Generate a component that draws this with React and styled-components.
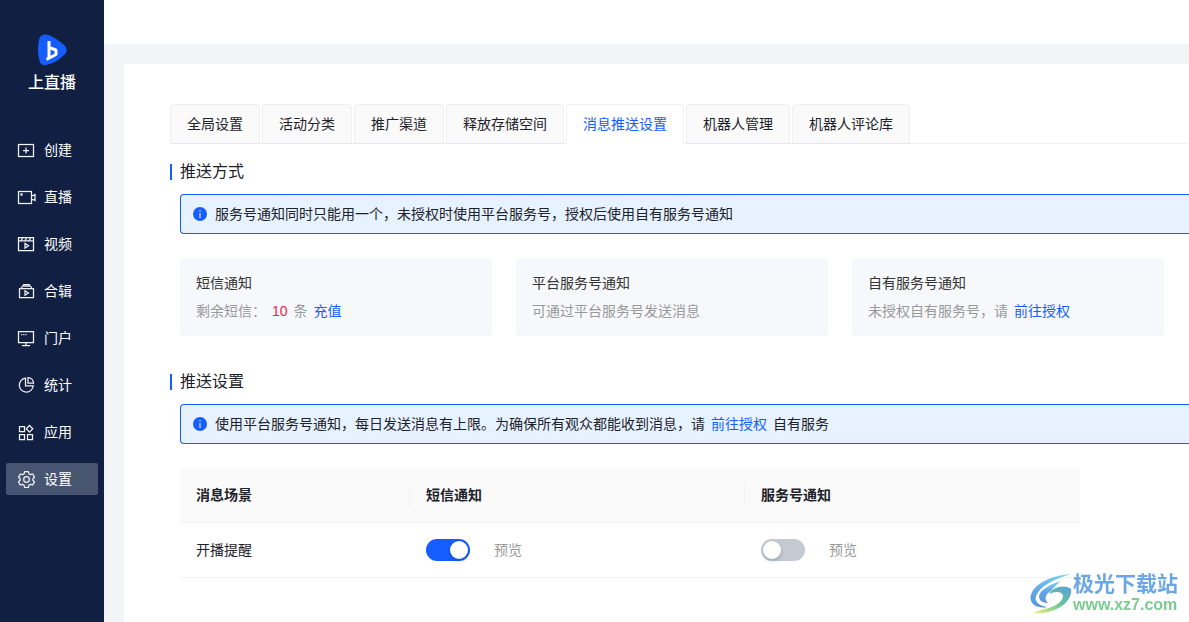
import React from 'react';
import styled, { createGlobalStyle, css } from 'styled-components';

const blue = '#165dff';

const GlobalStyle = createGlobalStyle`
  *, *::before, *::after { box-sizing: border-box; }
  body {
    margin: 0;
    font-family: "Liberation Sans", "Noto Sans CJK SC", sans-serif;
    font-size: 14px;
    line-height: 22px;
    color: #1d2129;
  }
  button { font: inherit; border: 0; padding: 0; background: none; cursor: pointer; }
  a { text-decoration: none; }
`;

const Page = styled.div`
  display: flex;
  min-height: 100vh;
  background: #f3f4f6;
`;

const Sidebar = styled.aside`
  flex: 0 0 104px;
  padding: 34px 6px 0;
  background: #111f42;
`;

const Brand = styled.div`
  display: flex;
  flex-direction: column;
  align-items: center;
  gap: 4px;
  margin-bottom: 38px;
  color: #fff;
  font-size: 16px;
  font-weight: 500;
  line-height: 26px;
`;

const Nav = styled.nav`
  display: flex;
  flex-direction: column;
  gap: 15px;
`;

const NavLink = styled.a`
  display: flex;
  align-items: center;
  gap: 8px;
  height: 32px;
  padding-left: 11px;
  border-radius: 2px;
  color: #fff;
  background: ${(p) => (p.$active ? '#475472' : 'transparent')};
`;

const NavIcon = styled.svg`
  width: 19px;
  height: 18px;
  fill: none;
  stroke: #f2f3f7;
  stroke-width: 1.25;
`;

const Main = styled.div`
  flex: 1;
  min-width: 0;
  display: flex;
  flex-direction: column;
`;

const TopBar = styled.header`
  height: 44px;
  background: #fff;
`;

const Content = styled.main`
  flex: 1;
  margin: 20px 0 0 20px;
  padding: 40px 0 0 46px;
  background: #fff;
`;

const TabList = styled.div`
  display: flex;
  gap: 2px;
  margin-bottom: 16px;
  box-shadow: inset 0 -1px #f0f0f0;
`;

const Tab = styled.button`
  height: 40px;
  && { padding: 0 16px; border: 1px solid #f0f0f0; }
  border-radius: 4px 4px 0 0;
  white-space: nowrap;
  ${(p) =>
    p.$active
      ? css`
          && { color: ${blue}; background: #fff; border-bottom-color: #fff; }
        `
      : css`
          && { color: #1d2129; background: #fafafa; border-bottom-color: #e5e6eb; }
        `}
`;

const Section = styled.section`
  & + & { margin-top: 34px; }
`;

const SectionTitle = styled.h2`
  display: flex;
  align-items: center;
  gap: 8px;
  margin: 0 0 10px;
  font-size: 16px;
  font-weight: 400;
  line-height: 24px;
  &::before {
    content: "";
    width: 2px;
    height: 16px;
    background: ${blue};
  }
`;

const SectionBody = styled.div`
  display: flex;
  flex-direction: column;
  gap: 24px;
  padding-left: 10px;
`;

const Notice = styled.div`
  display: flex;
  align-items: center;
  gap: 8px;
  height: 40px;
  padding-left: 12px;
  border: 1px solid ${blue};
  border-right: 0;
  border-radius: 4px 0 0 4px;
  background: #e6f2ff;
`;

const InfoMark = styled.svg`
  width: 14px;
  height: 14px;
  flex: none;
`;

const NoticeText = styled.p`
  display: flex;
  gap: 6px;
  margin: 0;
  white-space: nowrap;
`;

const TextLink = styled.a`
  color: ${blue};
`;

const Cards = styled.div`
  display: grid;
  grid-template-columns: repeat(3, 1fr);
  gap: 24px;
  padding-right: 25px;
`;

const Card = styled.article`
  display: flex;
  flex-direction: column;
  gap: 6px;
  padding: 14px 16px;
  border-radius: 4px;
  background: #f7f8fc;
`;

const CardTitle = styled.h3`
  margin: 0;
  font-size: 14px;
  font-weight: 400;
  color: #333;
`;

const CardText = styled.p`
  display: flex;
  gap: 6px;
  margin: 0;
  color: #999;
  white-space: nowrap;
`;

const Count = styled.span`
  color: #f0224b;
`;

const Table = styled.table`
  width: 100%;
  max-width: 900px;
  table-layout: fixed;
  border-collapse: separate;
  border-spacing: 0;
  th, td {
    height: 55px;
    padding: 0 16px;
    text-align: left;
    border-bottom: 1px solid #f2f2f2;
  }
  th {
    font-weight: 700;
    background: #fafafa;
  }
  th:first-child { width: 230px; border-top-left-radius: 4px; }
  th:last-child { border-top-right-radius: 4px; }
  th:not(:last-child) {
    background: linear-gradient(#f0f0f0, #f0f0f0) right center / 1px 22px no-repeat #fafafa;
  }
`;

const SwitchCell = styled.div`
  display: flex;
  align-items: center;
  gap: 24px;
`;

const Switch = styled.input`
  appearance: none;
  display: flex;
  width: 44px;
  height: 22px;
  margin: 0;
  padding: 2px;
  border-radius: 11px;
  background: #c5c9d1;
  cursor: pointer;
  &::before {
    content: "";
    width: 18px;
    height: 18px;
    border-radius: 50%;
    background: #fff;
    box-shadow: 0 2px 4px rgba(0, 35, 11, 0.2);
  }
  &:checked {
    justify-content: flex-end;
    background: ${blue};
  }
`;

const PreviewButton = styled.button`
  && { color: #999; }
`;

const Watermark = styled.div`
  position: fixed;
  right: 11px;
  bottom: 7px;
  display: flex;
  align-items: center;
  gap: 1px;
`;

const WatermarkText = styled.div`
  display: flex;
  flex-direction: column;
`;

const WatermarkName = styled.span`
  color: #6ba7e5;
  font-size: 21px;
  font-weight: 700;
  line-height: 22px;
`;

const WatermarkUrl = styled.span`
  color: #7ccb92;
  font-size: 16px;
  font-weight: 700;
  line-height: 20px;
`;

const icons = {
  create: (
    <>
      <rect x="1.500" y="3.500" width="15" height="12" />
      <path d="M9 6.500v6M6 9.500h6" />
    </>
  ),
  live: (
    <>
      <rect x="1.500" y="3.500" width="13" height="12" />
      <path d="M15 7.500h1l2-1v6l-2-1h-1" />
      <rect x="4" y="6" width="1" height="1" />
    </>
  ),
  video: (
    <>
      <path d="M1.500 2.500h15v13h-15zM1.500 5.800h15M4 5.500l2-3M8 5.500l2-3M12 5.500l2-3" />
      <path d="M8 8.500v4.500l3.500-2.200z" />
    </>
  ),
  album: (
    <>
      <path d="M2.500 6.500h14v9h-14zM4 6.500l1.500-2.500h8l1.500 2.500M6 2.500h7" />
      <path d="M8 8.800v4.400l3.500-2.200z" />
    </>
  ),
  portal: (
    <>
      <path d="M1.500 2.500h15v11h-15zM9 13.500v3M5 16.500h8" />
      <path d="M4 5.500h1.200M6.200 5.500h1.200M8.400 5.500h1.200" />
    </>
  ),
  stats: (
    <>
      <path d="M8.500 2.200a7 7 0 1 0 7.800 7.600H8.500z" />
      <path d="M11 1.500v5.500h5.500a5.500 5.500 0 0 0-5.500-5.500z" />
    </>
  ),
  apps: (
    <>
      <path d="M2.500 3.500h5v5h-5zM2.500 11.500h5v5h-5zM10.500 11.500h5v5h-5z" />
      <path d="M12.500 2.500l3.300 3.300-3.300 3.300-3.300-3.300z" />
    </>
  ),
  settings: (
    <>
      <path d="M7.700 1.500h3.600l.6 2.200 1.600.9 2.200-.6 1.800 3.100-1.600 1.600v1.600l1.600 1.600-1.800 3.100-2.200-.6-1.600.9-.6 2.200H7.700l-.6-2.200-1.600-.9-2.200.6-1.800-3.100 1.600-1.600V8.700L1.500 7.100 3.300 4l2.200.6 1.600-.9z" strokeLinejoin="round" />
      <circle cx="9.500" cy="9.500" r="2.800" />
    </>
  ),
};

const navItems = [
  ['create', '创建'],
  ['live', '直播'],
  ['video', '视频'],
  ['album', '合辑'],
  ['portal', '门户'],
  ['stats', '统计'],
  ['apps', '应用'],
  ['settings', '设置'],
];

const tabs = ['全局设置', '活动分类', '推广渠道', '释放存储空间', '消息推送设置', '机器人管理', '机器人评论库'];

function InfoIcon() {
  return (
    <InfoMark viewBox="0 0 14 14" aria-hidden="true">
      <circle cx="7" cy="7" r="7" fill={blue} />
      <path d="M6.400 3h1.200v1.500H6.400zM6.400 6h1.200v5H6.400z" fill="#d5e5ff" />
    </InfoMark>
  );
}

export default function App() {
  return (
    <>
      <GlobalStyle />
      <Page>
        <Sidebar>
          <Brand>
            <svg width="32" height="32" viewBox="0 0 32 32" aria-hidden="true">
              <path d="M3 6Q4 0 10 .5Q16 1 27 10Q34 16 28 21Q20 29 10 31Q4 32 3 25Q1 15 3 6Z" fill="#165dff" />
              <path d="M13 7v18M13 13.500l7 2.500v4.500L10.500 25.500" fill="none" stroke="#fff" strokeWidth="3" strokeLinejoin="bevel" />
            </svg>
            上直播
          </Brand>
          <Nav>
            {navItems.map(([icon, label]) => (
              <NavLink key={icon} href="#" $active={icon === 'settings'}>
                <NavIcon viewBox="0 0 19 18" aria-hidden="true">{icons[icon]}</NavIcon>
                {label}
              </NavLink>
            ))}
          </Nav>
        </Sidebar>
        <Main>
          <TopBar />
          <Content>
            <TabList role="tablist">
              {tabs.map((t) => (
                <Tab key={t} role="tab" aria-selected={t === '消息推送设置'} $active={t === '消息推送设置'}>
                  {t}
                </Tab>
              ))}
            </TabList>
            <Section>
              <SectionTitle>推送方式</SectionTitle>
              <SectionBody>
                <Notice>
                  <InfoIcon />
                  <NoticeText>服务号通知同时只能用一个，未授权时使用平台服务号，授权后使用自有服务号通知</NoticeText>
                </Notice>
                <Cards>
                  <Card>
                    <CardTitle>短信通知</CardTitle>
                    <CardText>
                      <span>剩余短信：</span>
                      <Count>10</Count>
                      <span>条</span>
                      <TextLink href="#">充值</TextLink>
                    </CardText>
                  </Card>
                  <Card>
                    <CardTitle>平台服务号通知</CardTitle>
                    <CardText>可通过平台服务号发送消息</CardText>
                  </Card>
                  <Card>
                    <CardTitle>自有服务号通知</CardTitle>
                    <CardText>
                      <span>未授权自有服务号，请</span>
                      <TextLink href="#">前往授权</TextLink>
                    </CardText>
                  </Card>
                </Cards>
              </SectionBody>
            </Section>
            <Section>
              <SectionTitle>推送设置</SectionTitle>
              <SectionBody>
                <Notice>
                  <InfoIcon />
                  <NoticeText>
                    <span>使用平台服务号通知，每日发送消息有上限。为确保所有观众都能收到消息，请</span>
                    <TextLink href="#">前往授权</TextLink>
                    <span>自有服务</span>
                  </NoticeText>
                </Notice>
                <Table>
                  <thead>
                    <tr>
                      <th scope="col">消息场景</th>
                      <th scope="col">短信通知</th>
                      <th scope="col">服务号通知</th>
                    </tr>
                  </thead>
                  <tbody>
                    <tr>
                      <td>开播提醒</td>
                      <td>
                        <SwitchCell>
                          <Switch type="checkbox" role="switch" defaultChecked aria-label="短信通知" />
                          <PreviewButton type="button">预览</PreviewButton>
                        </SwitchCell>
                      </td>
                      <td>
                        <SwitchCell>
                          <Switch type="checkbox" role="switch" aria-label="服务号通知" />
                          <PreviewButton type="button">预览</PreviewButton>
                        </SwitchCell>
                      </td>
                    </tr>
                  </tbody>
                </Table>
              </SectionBody>
            </Section>
          </Content>
        </Main>
      </Page>
      <Watermark>
        <svg width="42" height="42" viewBox="0 0 42 42" aria-hidden="true">
          <defs>
            <linearGradient id="swirl" x1="0" y1="0" x2="0" y2="1">
              <stop offset="0" stopColor="#7fd0ee" />
              <stop offset="0.500" stopColor="#62a6e4" />
              <stop offset="1" stopColor="#5b95dc" />
            </linearGradient>
            <linearGradient id="leaf" x1="1" y1="0" x2="0" y2="1">
              <stop offset="0" stopColor="#5b9fe0" />
              <stop offset="0.450" stopColor="#66c29a" />
              <stop offset="1" stopColor="#eef07a" />
            </linearGradient>
          </defs>
          <path d="M41 1C25 2 3 9 .5 24c-.5 8 8 12 17 10C10 33 4 29 6 23 10 13 24 6 41 1Z" fill="url(#swirl)" />
          <path d="M31 8C20 11 10 17 9 23c0 5 4 7 9 7-4-3-3-9 3-12 4-5 6-7 10-10Z" fill="url(#swirl)" />
          <path d="M19 21C23 14 34 11 41 16c2 11-13 26-38 24 4-2 8-3 12-4 12-3 18-8 18-13-1-5-8-5-14-2Z" fill="url(#leaf)" />
        </svg>
        <WatermarkText>
          <WatermarkName>极光下载站</WatermarkName>
          <WatermarkUrl>www.xz7.com</WatermarkUrl>
        </WatermarkText>
      </Watermark>
    </>
  );
}
